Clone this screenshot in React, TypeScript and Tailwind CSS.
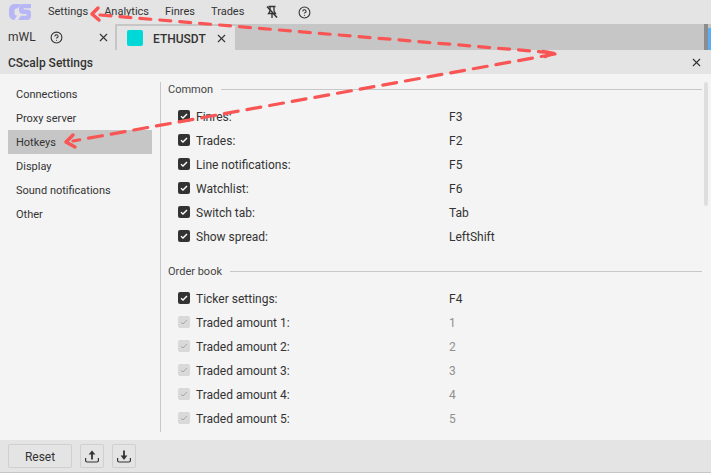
import React from "react";
import { X, CircleHelp } from "lucide-react";

const sideItems = ["Connections", "Proxy server", "Hotkeys", "Display", "Sound notifications", "Other"];

const common = [
  { label: "Finres:", key: "F3" },
  { label: "Trades:", key: "F2" },
  { label: "Line notifications:", key: "F5" },
  { label: "Watchlist:", key: "F6" },
  { label: "Switch tab:", key: "Tab" },
  { label: "Show spread:", key: "LeftShift" },
];

const orderBook = [
  { label: "Ticker settings:", key: "F4" },
  { label: "Traded amount 1:", key: "1", off: true },
  { label: "Traded amount 2:", key: "2", off: true },
  { label: "Traded amount 3:", key: "3", off: true },
  { label: "Traded amount 4:", key: "4", off: true },
  { label: "Traded amount 5:", key: "5", off: true },
];

const Row = ({ label, hotkey, off }: { label: string; hotkey: string; off?: boolean }) => (
  <div className="flex h-6 items-center pl-[10px]">
    <span
      className={`flex h-3 w-3 items-center justify-center rounded-[2px] ${off ? "bg-[#d9d9d9]" : "bg-[#333333]"}`}
    >
      <svg width="8" height="6" viewBox="0 0 8 6" fill="none" stroke={off ? "#a6a6a6" : "#ffffff"} strokeWidth={off ? 1 : 1.4}>
        <path d="M1 3.2 L3 5 L7 1" />
      </svg>
    </span>
    <span className="ml-[6px] w-[253px] pt-[2px] text-[#333333]">{label}</span>
    <span className={`pt-[2px] ${off ? "text-[#8f8f8f]" : "text-[#333333]"}`}>{hotkey}</span>
  </div>
);

const SectionTitle = ({ title }: { title: string }) => (
  <div className="flex h-[14px] items-center gap-2 text-[11px] text-[#444444]">
    <span className="pt-[2px]">{title}</span>
    <span className="h-px flex-1 bg-[#c8c8c8]" />
  </div>
);

export default function App() {
  return (
    <div className="relative flex h-[473px] w-[711px] flex-col overflow-hidden bg-[#f4f4f4] font-['Roboto',sans-serif] text-[12px] text-[#333333]">
      {/* top menu */}
      <div className="flex h-6 items-center bg-[#e4e4e4]">
        <svg width="22" height="16" viewBox="0 0 22 16" className="ml-[9px]">
          <path d="M5 0h7L8.500 4.500H7.500A2 2 0 0 0 5.500 6.500v3a2 2 0 0 0 2 2H8L5.500 16A5.500 5.500 0 0 1 0 10.500v-5A5.500 5.500 0 0 1 5 0z" fill="#b7b7f6" />
          <path d="M14 0h8v4.200h-7.500v1.300H18a4 4 0 0 1 4 4V12a4 4 0 0 1-4 4H9l3-4.300h5.500v-1.700H13.500a4 4 0 0 1-3.500-4V4a4 4 0 0 1 4-4z" fill="#b7b7f6" />
        </svg>
        <div className="ml-[17px] flex items-center gap-[16px] pt-[1px] text-[11px]">
          <span>Settings</span>
          <span>Analytics</span>
          <span>Finres</span>
          <span>Trades</span>
        </div>
        <svg width="14" height="14" viewBox="0 0 14 14" className="ml-[21px]" fill="none" stroke="#333333" strokeWidth="1.3">
          <path d="M3.500 1.500h7M5 1.500v4.500L3.500 8.500h7L9 6V1.500M7 8.500V13" />
          <path d="M2 1.500 12 12.500" strokeWidth="1.500" />
        </svg>
        <CircleHelp size={13} className="ml-[19px]" />
      </div>

      {/* tabs */}
      <div className="flex h-[26px] bg-[#c6c6c6]">
        <div className="flex h-[26px] w-[115px] items-center bg-[#e4e4e4] pl-2">
          <span className="text-[12px]">mWL</span>
          <CircleHelp size={13} className="ml-[14px]" />
          <X size={13} className="ml-[34px]" />
        </div>
        <div className="mt-[2px] ml-[2px] flex h-6 w-[118px] items-center bg-[#e4e4e4] pl-[10px]">
          <span className="h-4 w-4 rounded-[2px] bg-[#00d8d8]" />
          <span className="ml-[10px] pt-[1px] font-medium">ETHUSDT</span>
          <X size={13} className="ml-[9px]" />
        </div>
        <div className="ml-auto flex">
          <span className="h-full w-1 bg-[#8c8c8c]" />
          <span className="mt-1 h-[22px] w-[3px] bg-[#5aaef5]" />
        </div>
      </div>

      {/* settings title */}
      <div className="flex h-6 items-center justify-between bg-[#e4e4e4] pr-2 pl-2">
        <span className="pt-[1px] font-medium">CScalp Settings</span>
        <X size={13} />
      </div>

      {/* body */}
      <div className="flex min-h-0 flex-1 pt-2 pb-2 pl-2">
        <div className="w-[144px] shrink-0 text-[11px]">
          {sideItems.map((item) => (
            <div
              key={item}
              className={`flex h-6 items-center pt-[2px] pl-2 ${item === "Hotkeys" ? "bg-[#c6c6c6]" : ""}`}
            >
              {item}
            </div>
          ))}
        </div>
        <div className="ml-2 flex min-w-0 flex-1 border-l border-[#c8c8c8] pl-[7px]">
          <div className="w-[534px] overflow-hidden">
            <SectionTitle title="Common" />
            <div className="mt-[8px]">
              {common.map((r) => (
                <Row key={r.label} label={r.label} hotkey={r.key} />
              ))}
            </div>
            <div className="mt-[16px]">
              <SectionTitle title="Order book" />
            </div>
            <div className="mt-[8px]">
              {orderBook.map((r) => (
                <Row key={r.label} label={r.label} hotkey={r.key} off={r.off} />
              ))}
            </div>
          </div>
          <div className="ml-[2px] h-[124px] w-1 rounded-[2px] bg-[#dedede]" />
        </div>
      </div>

      {/* footer */}
      <div className="flex h-[33px] items-start gap-2 border-b border-[#c6c6c6] bg-[#e4e4e4] pt-1 pl-2">
        <button className="h-6 w-[64px] rounded-[2px] border border-[#cfcfcf] pt-[1px] text-[12px] text-[#333333]">Reset</button>
        <button className="flex h-6 w-6 items-center justify-center rounded-[2px] border border-[#cfcfcf]">
          <svg width="14" height="13" viewBox="0 0 14 13" fill="none" stroke="#333333" strokeWidth="1.200">
            <path d="M.6 8v2.500a1.500 1.500 0 0 0 1.500 1.500h9.800a1.500 1.500 0 0 0 1.500-1.500V8" />
            <path d="M7 9.500V2" strokeWidth="1.800" />
            <path d="M7 .5 3.600 4.500h6.800z" fill="#333333" stroke="none" />
          </svg>
        </button>
        <button className="flex h-6 w-6 items-center justify-center rounded-[2px] border border-[#cfcfcf]">
          <svg width="14" height="13" viewBox="0 0 14 13" fill="none" stroke="#333333" strokeWidth="1.200">
            <path d="M.6 8v2.500a1.500 1.500 0 0 0 1.500 1.500h9.800a1.500 1.500 0 0 0 1.500-1.500V8" />
            <path d="M7 .5V6" strokeWidth="1.800" />
            <path d="M7 10 3.600 5.500h6.800z" fill="#333333" stroke="none" />
          </svg>
        </button>
      </div>

      {/* annotation arrows */}
      <svg width="711" height="473" className="pointer-events-none absolute top-0 left-0">
        <g fill="none" stroke="#f95555" strokeWidth="3.200" strokeLinejoin="round" strokeLinecap="round">
          <path d="M100 15 L555 53" strokeDasharray="11 9" />
          <path d="M555 54 L73 141" strokeDasharray="14 9" />
          <path d="M98 8 L92 14 L99 20" strokeWidth="3.500" />
          <path d="M73 135 L66 142 L75 147" strokeWidth="3.500" />
          <path d="M543 51 L554 53 L545 57" strokeWidth="2.600" />
        </g>
      </svg>
    </div>
  );
}
